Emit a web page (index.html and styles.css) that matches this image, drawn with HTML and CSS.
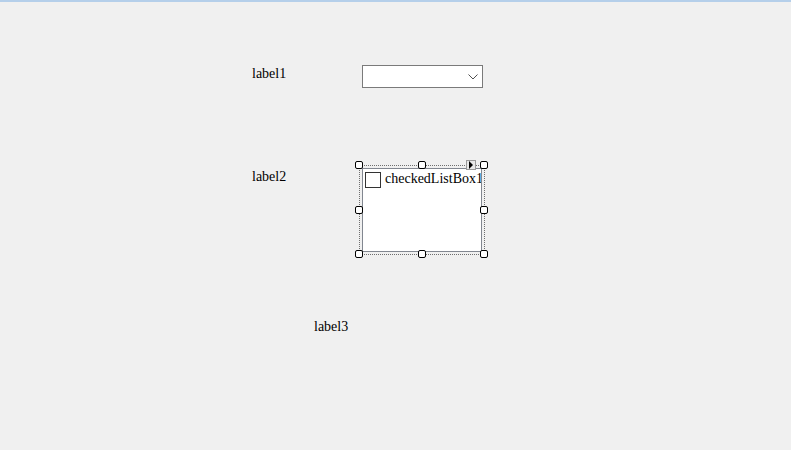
FILE: index.html
```html
<!DOCTYPE html>
<html>
<head>
<meta charset="utf-8">
<link rel="stylesheet" href="styles.css">
</head>
<body>
<div class="topbar"></div>
<div class="surface">
  <div class="label label1">label1</div>
  <div class="combo">
    <svg class="chev" width="10" height="6" viewBox="0 0 10 6"><polyline points="0.5,0.5 5,5 9.5,0.5" fill="none" stroke="#505050" stroke-width="1"/></svg>
  </div>
  <div class="label label2">label2</div>
  <div class="selection">
    <div class="listbox">
      <div class="item"><span class="check"></span><span class="itext">checkedListBox1</span></div>
    </div>
    <span class="h h-tl"></span><span class="h h-tc"></span><span class="h h-tr"></span>
    <span class="h h-ml"></span><span class="h h-mr"></span>
    <span class="h h-bl"></span><span class="h h-bc"></span><span class="h h-br"></span>
    <span class="smart"><svg width="6" height="8" viewBox="0 0 6 8"><polygon points="1,0 5,4 1,8" fill="#000"/></svg></span>
  </div>
  <div class="label label3">label3</div>
</div>
</body>
</html>
```
FILE: styles.css
```css
html, body {
  margin: 0;
  padding: 0;
  background: #f0f0f0;
  width: 791px;
  height: 450px;
  overflow: hidden;
}
.topbar {
  height: 2px;
  background: #b5cfea;
}
.surface {
  position: relative;
  height: 448px;
  font-family: "Liberation Serif", serif;
  font-size: 14px;
  color: #000;
}
.label {
  position: absolute;
  line-height: 16px;
}
.label1 { left: 252px; top: 64px; }
.label2 { left: 252px; top: 167px; }
.label3 { left: 314px; top: 317px; }
.combo {
  position: absolute;
  left: 362px;
  top: 63px;
  width: 119px;
  height: 21px;
  background: #fff;
  border: 1px solid #7a7a7a;
}
.chev {
  position: absolute;
  left: 105px;
  top: 8px;
}
.selection {
  position: absolute;
  left: 359px;
  top: 163px;
  width: 124px;
  height: 88px;
  border: 1px dotted #6e6e6e;
}
.listbox {
  position: absolute;
  left: 2px;
  top: 2px;
  width: 118px;
  height: 82px;
  background: #fff;
  border: 1px solid #828790;
  overflow: hidden;
}
.item {
  display: flex;
  align-items: flex-start;
  padding: 3px 0 0 2px;
}
.check {
  width: 14px;
  height: 14px;
  border: 1px solid #333;
  box-sizing: content-box;
  flex: none;
}
.itext {
  margin-left: 4px;
  line-height: 16px;
  margin-top: -1px;
  white-space: nowrap;
}
.h {
  position: absolute;
  width: 6px;
  height: 6px;
  background: #fff;
  border: 1px solid #000;
  border-radius: 2px;
}
.h-tl { left: -5px; top: -5px; }
.h-tc { left: 58px; top: -5px; }
.h-tr { left: 120px; top: -5px; }
.h-ml { left: -5px; top: 40px; }
.h-mr { left: 120px; top: 40px; }
.h-bl { left: -5px; top: 84px; }
.h-bc { left: 58px; top: 84px; }
.h-br { left: 120px; top: 84px; }
.smart {
  position: absolute;
  left: 106px;
  top: -6px;
  width: 8px;
  height: 8px;
  border: 1px solid #9a9a9a;
  background: #e8e8e8;
  display: flex;
  align-items: center;
  justify-content: center;
}
```
